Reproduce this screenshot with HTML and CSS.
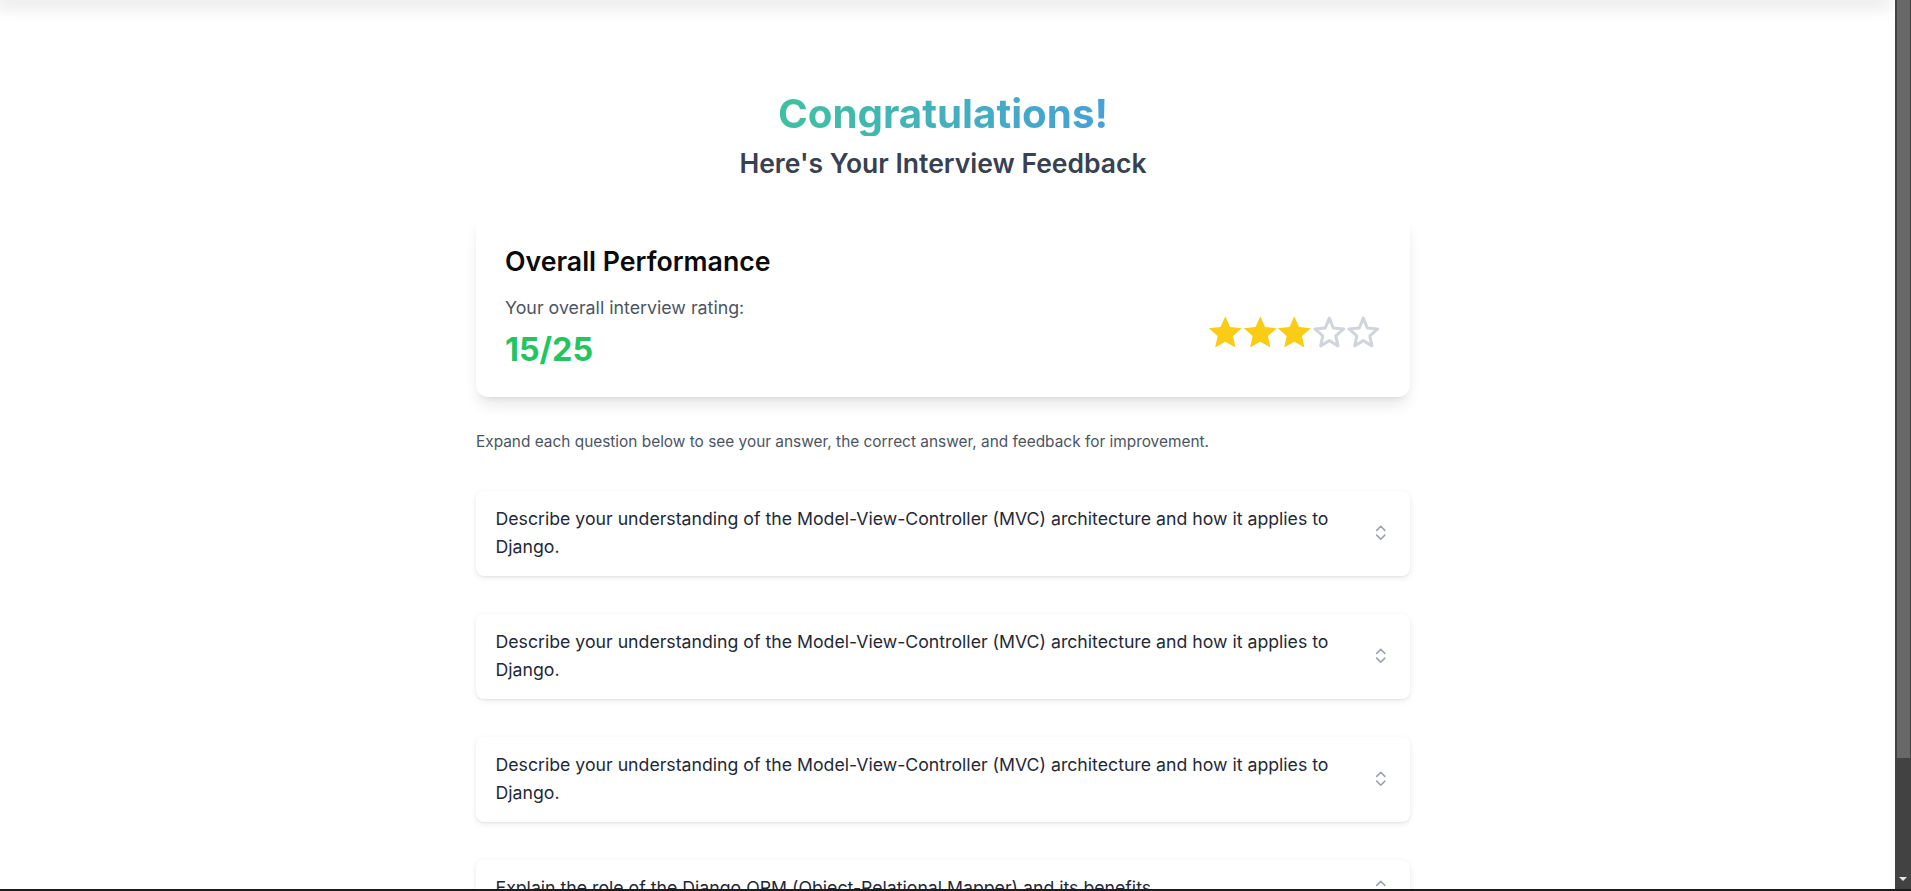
FILE: index.html
```html
<!DOCTYPE html>
<html lang="en">
<head>
<meta charset="utf-8">
<title>Interview Feedback</title>
<link rel="stylesheet" href="styles.css">
</head>
<body>
<div class="screen">
  <div class="viewport">
    <main class="main">
      <div class="topshadow"></div>
      <div class="page">
        <h1 class="title">Congratulations!</h1>
        <h2 class="subtitle">Here's Your Interview Feedback</h2>

        <section class="summary">
          <h3 class="summary-title">Overall Performance</h3>
          <div class="rating-row">
            <div class="rating-info">
              <div class="label">Your overall interview rating:</div>
              <div class="score">15/25</div>
            </div>
            <div class="stars">
              <svg class="star full" viewBox="0 0 24 24"><polygon points="12,0.9 15.29,8.37 23.41,9.19 17.33,14.63 19.05,22.61 12,18.5 4.95,22.61 6.67,14.63 0.59,9.19 8.71,8.37"/></svg>
              <svg class="star full" viewBox="0 0 24 24"><polygon points="12,0.9 15.29,8.37 23.41,9.19 17.33,14.63 19.05,22.61 12,18.5 4.95,22.61 6.67,14.63 0.59,9.19 8.71,8.37"/></svg>
              <svg class="star full" viewBox="0 0 24 24"><polygon points="12,0.9 15.29,8.37 23.41,9.19 17.33,14.63 19.05,22.61 12,18.5 4.95,22.61 6.67,14.63 0.59,9.19 8.71,8.37"/></svg>
              <svg class="star empty" viewBox="0 0 24 24"><polygon points="12,2.2 14.8,9 22,9.7 16.5,14.5 18,21.4 12,17.8 6,21.4 7.5,14.5 2,9.7 9.2,9"/></svg>
              <svg class="star empty" viewBox="0 0 24 24"><polygon points="12,2.2 14.8,9 22,9.7 16.5,14.5 18,21.4 12,17.8 6,21.4 7.5,14.5 2,9.7 9.2,9"/></svg>
            </div>
          </div>
        </section>

        <p class="hint">Expand each question below to see your answer, the correct answer, and feedback for improvement.</p>

        <div class="questions">
          <div class="q">
            <div class="q-text">Describe your understanding of the Model-View-Controller (MVC) architecture and how it applies to Django.</div>
            <svg class="chev" viewBox="0 0 24 24"><path d="m7 15 5 5 5-5"/><path d="m7 9 5-5 5 5"/></svg>
          </div>
          <div class="q">
            <div class="q-text">Describe your understanding of the Model-View-Controller (MVC) architecture and how it applies to Django.</div>
            <svg class="chev" viewBox="0 0 24 24"><path d="m7 15 5 5 5-5"/><path d="m7 9 5-5 5 5"/></svg>
          </div>
          <div class="q">
            <div class="q-text">Describe your understanding of the Model-View-Controller (MVC) architecture and how it applies to Django.</div>
            <svg class="chev" viewBox="0 0 24 24"><path d="m7 15 5 5 5-5"/><path d="m7 9 5-5 5 5"/></svg>
          </div>
          <div class="q">
            <div class="q-text">Explain the role of the Django ORM (Object-Relational Mapper) and its benefits.</div>
            <svg class="chev" viewBox="0 0 24 24"><path d="m7 15 5 5 5-5"/><path d="m7 9 5-5 5 5"/></svg>
          </div>
        </div>
      </div>
    </main>
    <div class="scrollbar">
      <div class="thumb"></div>
      <div class="track"><span class="arrow"></span></div>
    </div>
  </div>
  <div class="bottomline"></div>
</div>
</body>
</html>
```

FILE: styles.css
```css
html, body {
  margin: 0;
  height: 100%;
  overflow: hidden;
}

body {
  font-family: Inter, "Noto Sans", sans-serif;
  background: #ffffff;
  color: #111827;
}

.screen {
  display: flex;
  flex-direction: column;
  height: 100vh;
}

.viewport {
  flex: 1;
  display: flex;
  min-height: 0;
}

.main {
  flex: 1;
  overflow: hidden;
  padding-right: 9px;
}

.topshadow {
  height: 0;
  box-shadow: 0 0 18px 6px rgba(0, 0, 0, 0.12);
}

.page {
  width: 934px;
  margin: 0 auto;
  padding-top: 92px;
}

.title {
  width: fit-content;
  margin: 0 auto;
  font-size: 40.3px;
  line-height: 44px;
  font-weight: 700;
  background: linear-gradient(90deg, #3fc1a0, #47a0d8);
  -webkit-background-clip: text;
  background-clip: text;
  color: transparent;
}

.subtitle {
  margin: 9.5px 0 0;
  text-align: center;
  font-size: 26.5px;
  line-height: 34px;
  font-weight: 600;
  color: #374151;
}

.summary {
  margin-top: 35px;
  padding: 29px 29px 27.5px;
  border-radius: 12px;
  background: #ffffff;
  box-shadow: 0 10px 15px -3px rgba(0, 0, 0, 0.1), 0 4px 6px -4px rgba(0, 0, 0, 0.1);
}

.summary-title {
  margin: 0;
  font-size: 26.7px;
  line-height: 34px;
  font-weight: 600;
  color: #0a0a0a;
}

.rating-row {
  display: flex;
  justify-content: space-between;
  align-items: center;
  margin-top: 17.6px;
}

.label {
  font-size: 17.8px;
  line-height: 26px;
  color: #4b5563;
}

.score {
  margin-top: 10px;
  font-size: 32.3px;
  line-height: 38px;
  font-weight: 700;
  color: #22c55e;
}

.stars {
  display: flex;
}

.star {
  width: 34.6px;
  height: 34.6px;
  overflow: visible;
}

.star.full polygon {
  fill: #facc15;
}

.star.empty polygon {
  fill: none;
  stroke: #d1d5db;
  stroke-width: 2.1;
  stroke-linejoin: round;
}

.hint {
  margin: 33px 0 0;
  font-size: 15.4px;
  line-height: 24.4px;
  color: #4b5563;
}

.questions {
  margin-top: 36.5px;
  display: flex;
  flex-direction: column;
  gap: 38px;
}

.q {
  display: flex;
  align-items: center;
  justify-content: space-between;
  gap: 16px;
  padding: 14.5px 19.5px;
  border-radius: 8px;
  background: #ffffff;
  box-shadow: 0 2px 6px rgba(0, 0, 0, 0.08), 0 1px 2px rgba(0, 0, 0, 0.06);
}

.q-text {
  font-size: 17.7px;
  line-height: 28px;
  color: #1f2937;
}

.chev {
  flex-shrink: 0;
  width: 19.5px;
  height: 19.5px;
  fill: none;
  stroke: #9ca3af;
  stroke-width: 2;
  stroke-linecap: round;
  stroke-linejoin: round;
}

.scrollbar {
  width: 16px;
  display: flex;
  flex-direction: column;
  background: #424242;
}

.thumb {
  height: 758px;
  margin-left: 2px;
  margin-right: 1px;
  background: #686868;
}

.track {
  flex: 1;
  display: flex;
  justify-content: center;
  align-items: flex-end;
  padding-bottom: 8px;
}

.arrow {
  width: 0;
  height: 0;
  border-left: 4px solid transparent;
  border-right: 4px solid transparent;
  border-top: 4px solid #e5e5e5;
}

.bottomline {
  height: 2px;
  background: #1c1c1c;
}
```
